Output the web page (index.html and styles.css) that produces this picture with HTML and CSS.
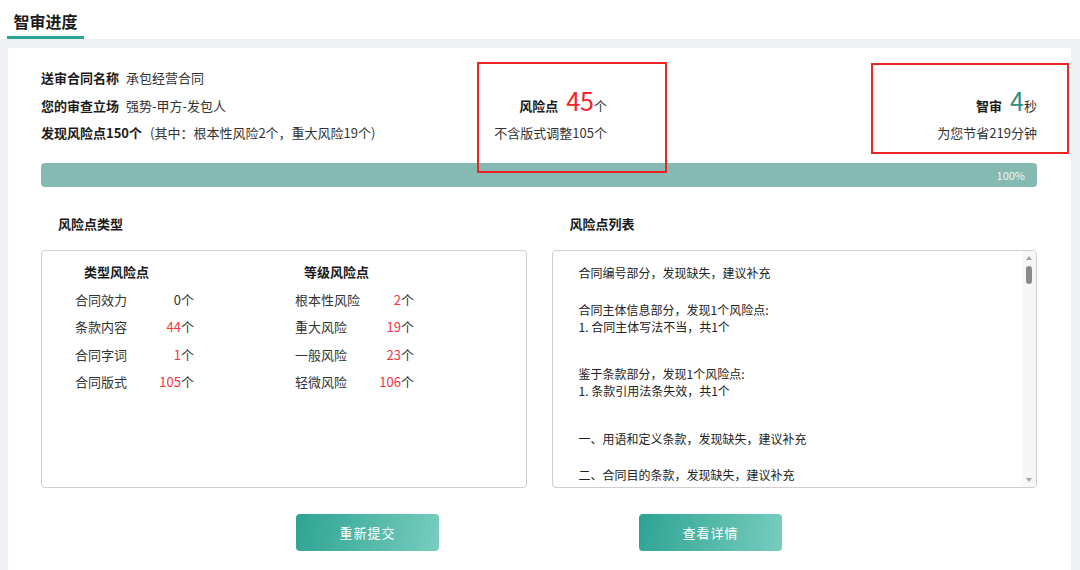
FILE: index.html
```html
<!DOCTYPE html>
<html lang="zh-CN">
<head>
<meta charset="utf-8">
<title>智审进度</title>
<link rel="stylesheet" href="styles.css">
</head>
<body>
<header class="header">
  <div class="tab">智审进度</div>
</header>
<main class="panel">
  <section class="summary">
    <div class="info">
      <div class="info-row"><span class="label">送审合同名称</span><span class="value">承包经营合同</span></div>
      <div class="info-row"><span class="label">您的审查立场</span><span class="value">强势-甲方-发包人</span></div>
      <div class="info-row"><span class="label">发现风险点150个</span><span class="value note">(其中：根本性风险2个，重大风险19个)</span></div>
    </div>
    <div class="stat stat-risk">
      <div class="stat-line"><span class="stat-label">风险点</span><span class="big red">45</span><span class="unit">个</span></div>
      <div class="stat-line sub">不含版式调整105个</div>
    </div>
    <div class="stat stat-time">
      <div class="stat-line"><span class="stat-label">智审</span><span class="big teal">4</span><span class="unit">秒</span></div>
      <div class="stat-line sub">为您节省219分钟</div>
    </div>
  </section>
  <div class="progress"><span class="progress-text">100%</span></div>
  <section class="details">
    <div class="col">
      <div class="col-title">风险点类型</div>
      <div class="box types">
        <div class="type-col">
          <div class="type-head">类型风险点</div>
          <div class="type-row"><span>合同效力</span><span><b class="num">0</b>个</span></div>
          <div class="type-row"><span>条款内容</span><span><b class="num red">44</b>个</span></div>
          <div class="type-row"><span>合同字词</span><span><b class="num red">1</b>个</span></div>
          <div class="type-row"><span>合同版式</span><span><b class="num red">105</b>个</span></div>
        </div>
        <div class="type-col">
          <div class="type-head">等级风险点</div>
          <div class="type-row"><span>根本性风险</span><span><b class="num red">2</b>个</span></div>
          <div class="type-row"><span>重大风险</span><span><b class="num red">19</b>个</span></div>
          <div class="type-row"><span>一般风险</span><span><b class="num red">23</b>个</span></div>
          <div class="type-row"><span>轻微风险</span><span><b class="num red">106</b>个</span></div>
        </div>
      </div>
    </div>
    <div class="col">
      <div class="col-title">风险点列表</div>
      <div class="box list">
        <div class="list-content">
          <p class="ln">合同编号部分，发现缺失，建议补充</p>
          <p class="ln gap2">合同主体信息部分，发现1个风险点:</p>
          <p class="ln">1. 合同主体写法不当，共1个</p>
          <p class="ln gap3">鉴于条款部分，发现1个风险点:</p>
          <p class="ln">1. 条款引用法条失效，共1个</p>
          <p class="ln gap3b">一、用语和定义条款，发现缺失，建议补充</p>
          <p class="ln gap2b">二、合同目的条款，发现缺失，建议补充</p>
        </div>
        <div class="scrollbar">
          <span class="arrow up"></span>
          <span class="thumb"></span>
          <span class="arrow down"></span>
        </div>
      </div>
    </div>
  </section>
  <div class="actions">
    <button class="btn">重新提交</button>
    <button class="btn">查看详情</button>
  </div>
  <div class="annot annot-risk"></div>
  <div class="annot annot-time"></div>
</main>
</body>
</html>
```

FILE: styles.css
```css
* { box-sizing: border-box; }
html, body { margin: 0; padding: 0; }
body {
  width: 1080px;
  height: 570px;
  overflow: hidden;
  background: #eff0f4;
  font-family: "Noto Sans CJK SC", "Noto Sans", sans-serif;
  color: #222;
  font-size: 13px;
}
.header {
  height: 39px;
  background: #fff;
  padding-left: 7px;
}
.tab {
  width: 77px;
  height: 39px;
  padding-top: 10px;
  border-bottom: 3px solid #2fa594;
  text-align: center;
  font-size: 16px;
  font-weight: 700;
  line-height: 22px;
  color: #1a1a1a;
}
.panel {
  position: relative;
  margin: 9px 9px 0 8px;
  height: 522px;
  background: #fff;
  padding: 16px 34px 0 33px;
}
.summary {
  display: flex;
  height: 82.5px;
}
.info { width: 436px; }
.info-row {
  line-height: 27.5px;
  height: 27.5px;
  white-space: nowrap;
}
.label { font-weight: 700; color: #1a1a1a; margin-right: 7px; }
.value { color: #333; }
.note { margin-left: 1px; }
.stat {
  padding-top: 27.5px;
  text-align: right;
  white-space: nowrap;
}
.stat-risk { width: 130px; }
.stat-time { margin-left: auto; }
.stat-line {
  height: 27.5px;
  line-height: 27.5px;
  color: #333;
}
.stat-label { font-weight: 700; color: #1a1a1a; margin-right: 8px; }
.big {
  font-size: 25px;
  font-weight: 400;
  line-height: 0;
}
.red { color: #f5222d; }
.teal { color: #2f8f85; }
.unit { color: #333; }
.sub { color: #333; }
.progress {
  margin-top: 16.5px;
  height: 24px;
  border-radius: 4px;
  background: #84bab1;
  text-align: right;
  padding-right: 12px;
}
.progress-text {
  color: #eef7f5;
  font-size: 11px;
  line-height: 24px;
}
.details {
  display: grid;
  grid-template-columns: 1fr 1fr;
  column-gap: 25px;
}
.col-title {
  margin: 27px 0 16px 17px;
  line-height: 20px;
  font-weight: 700;
  color: #1a1a1a;
}
.col:last-child .col-title { margin-left: 18px; }
.box {
  height: 238px;
  border: 1px solid #cfcfcf;
  border-radius: 4px;
}
.types {
  display: flex;
  gap: 101px;
  padding: 7px 0 0 33px;
}
.type-col { width: 119px; }
.type-head {
  font-weight: 700;
  color: #1a1a1a;
  line-height: 27.5px;
  padding-left: 9px;
}
.type-row {
  display: flex;
  justify-content: space-between;
  line-height: 27.5px;
  color: #333;
  white-space: nowrap;
}
.num { font-weight: 400; color: #333; }
.num.red { color: #f5333f; }
.list {
  display: flex;
  overflow: hidden;
}
.list-content {
  flex: 1;
  overflow: hidden;
  padding: 13px 0 0 26px;
  font-size: 12px;
  color: #222;
}
.ln { margin: 0; line-height: 17px; white-space: nowrap; }
.gap2 { margin-top: 20px; }
.gap3 { margin-top: 30px; }
.gap3b { margin-top: 31px; }
.gap2b { margin-top: 19px; }
.scrollbar {
  width: 14px;
  flex: none;
  background: #f7f7f7;
  display: flex;
  flex-direction: column;
  align-items: center;
  padding: 5px 0 5px;
}
.arrow {
  width: 0;
  height: 0;
  border-left: 3.5px solid transparent;
  border-right: 3.5px solid transparent;
}
.arrow.up { border-bottom: 4px solid #a3a3a3; }
.arrow.down { border-top: 4px solid #a3a3a3; margin-top: auto; }
.thumb {
  margin-top: 6px;
  width: 6px;
  height: 18px;
  border-radius: 3px;
  background: #8a8a8a;
}
.actions {
  display: flex;
  justify-content: center;
  gap: 200px;
  margin-top: 26px;
}
.btn {
  width: 143px;
  height: 37px;
  border: none;
  border-radius: 4px;
  background: linear-gradient(100deg, #2ea493 0%, #53b8a8 50%, #78cdbf 100%);
  color: #fff;
  font-family: inherit;
  font-size: 13px;
  line-height: 37px;
  letter-spacing: 1px;
  padding: 0;
}
.annot {
  position: absolute;
  border: 2px solid #ee2424;
  pointer-events: none;
}
.annot-risk { left: 469px; top: 14px; width: 190px; height: 111px; }
.annot-time { left: 863px; top: 15px; width: 198px; height: 91px; }
```
